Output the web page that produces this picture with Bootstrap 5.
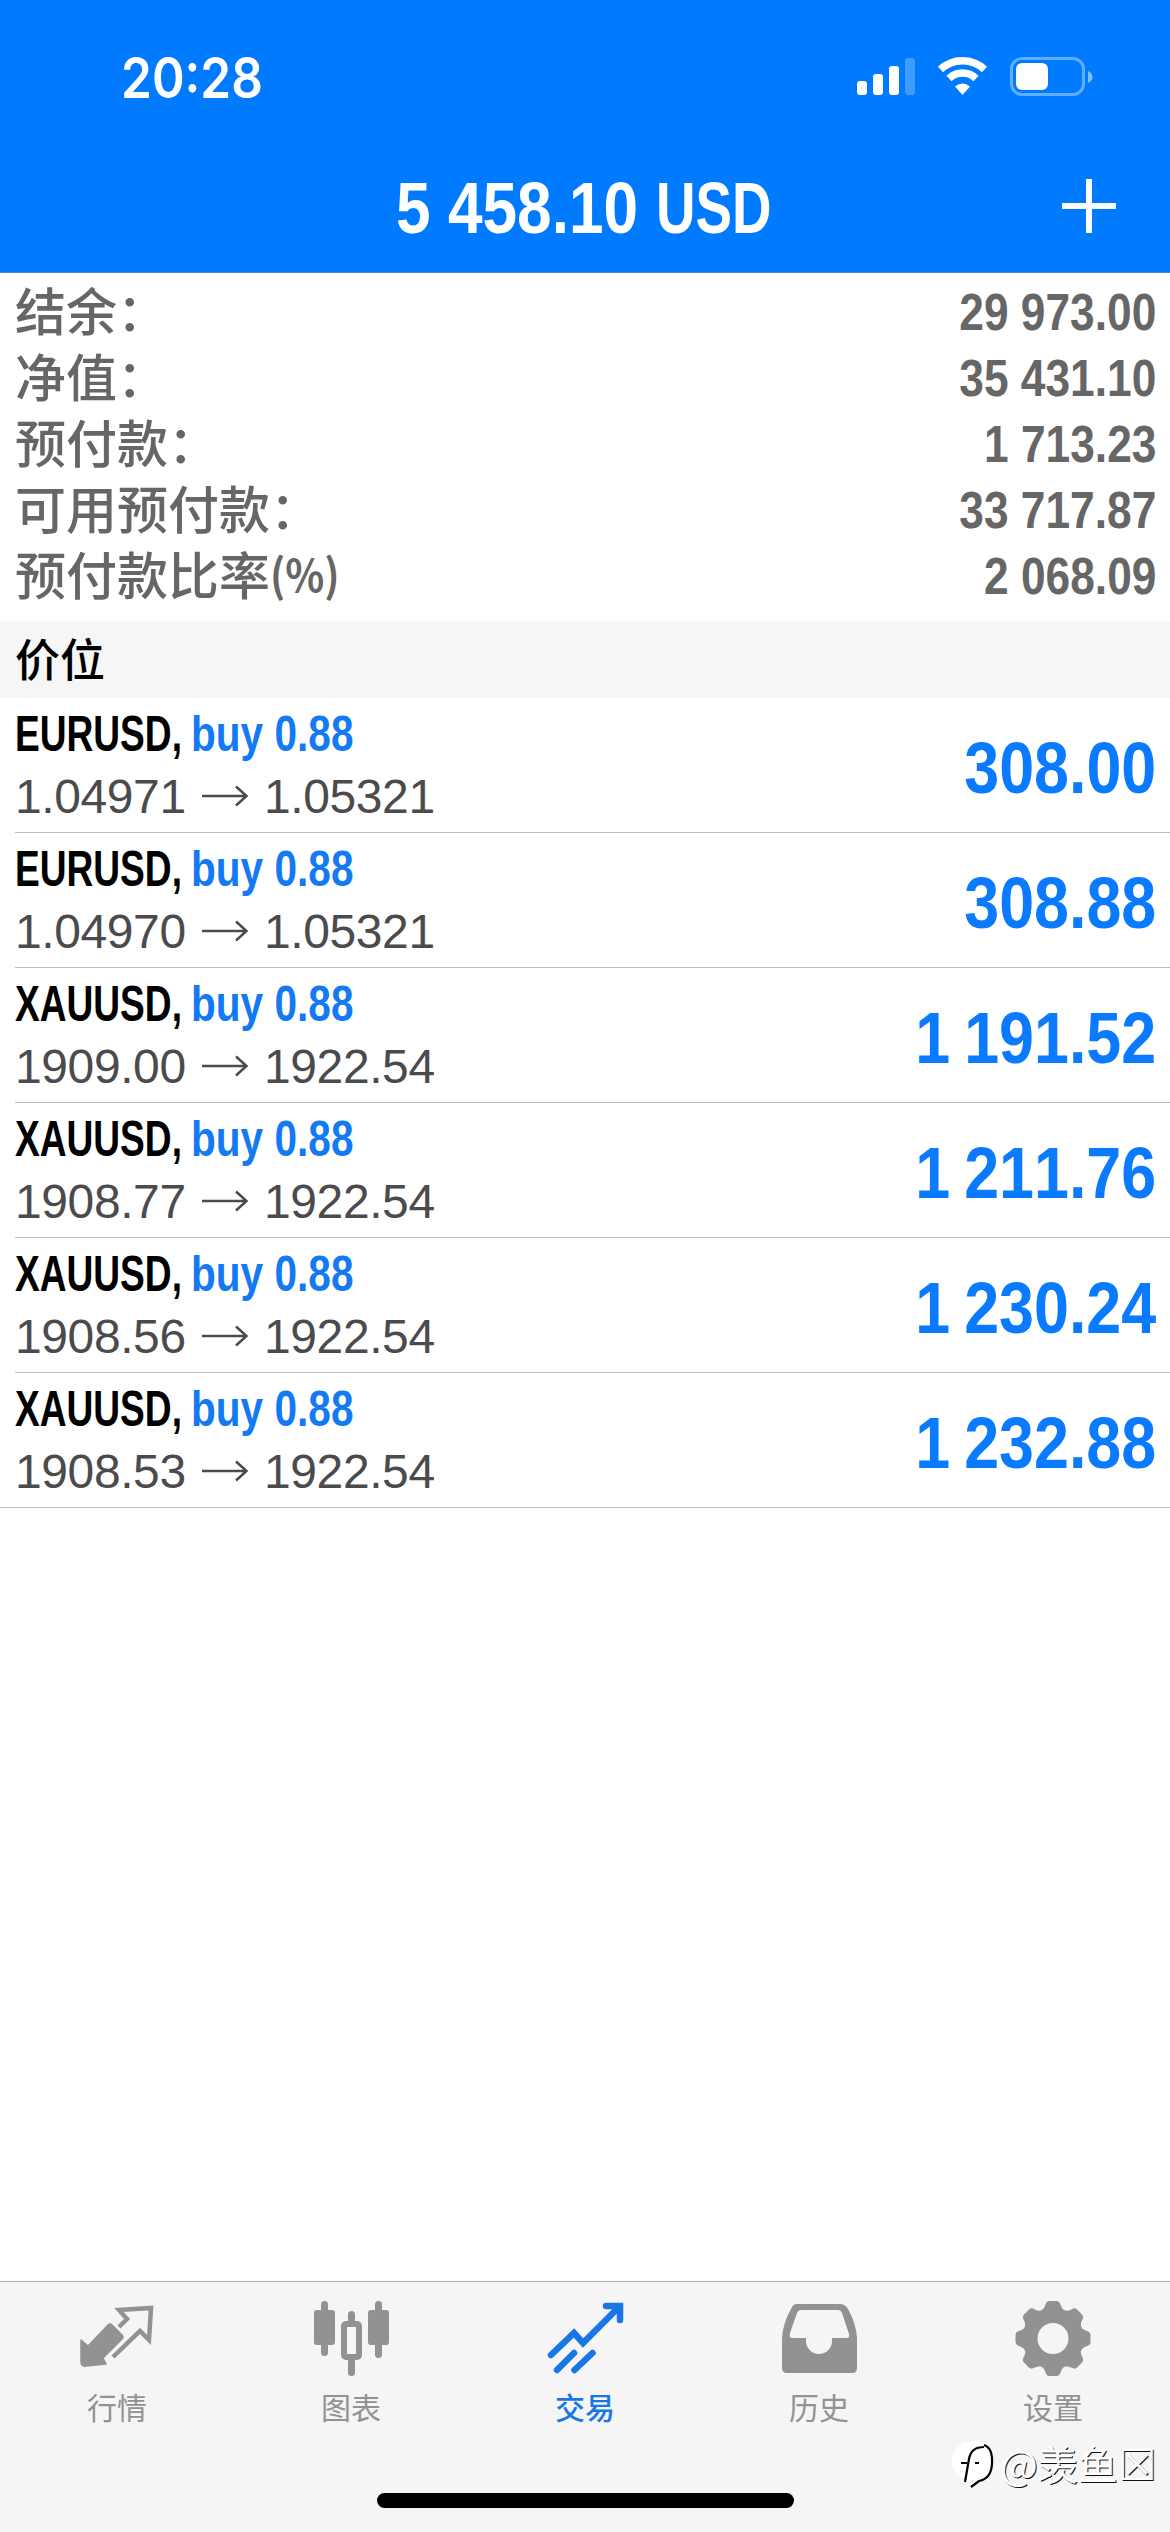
<!DOCTYPE html>
<html lang="zh-CN">
<head>
<meta charset="utf-8">
<meta name="viewport" content="width=device-width, initial-scale=1">
<title>交易</title>
<link rel="stylesheet" href="https://cdn.jsdelivr.net/npm/bootstrap@5.3.0/dist/css/bootstrap.min.css">
<style>
  body { font-family: "Liberation Sans", "Noto Sans CJK SC", sans-serif; background: #fff; color: #000; }
  .screen { width: 1170px; height: 2532px; overflow: hidden; }
  .topbar { background: #007aff; height: 273px; border-bottom: 1px solid #4a86c4; color: #fff; }
  .status { height: 153px; padding: 1px 75px 0 121px; }
  .clock { font-family: Inter, sans-serif; font-weight: 600; font-size: 56px; line-height: 1; padding-top: 1px; transform: scaleX(.885); }
  .titlebar { height: 110px; padding-right: 20px; font-size: 73px; font-weight: 700; line-height: 109px; }
  .title-num { width: 262px; }
  .title-num .narrow { transform: scaleX(.852); }
  .title-cur { width: 118px; margin-left: 18px; }
  .title-cur .narrow { transform: scaleX(.75); }
  .narrow { display: inline-block; white-space: nowrap; font-kerning: none; }
  .narrow-l { transform-origin: left center; }
  .narrow-r { transform-origin: right center; }
  .plus-btn { right: 54px; top: 26px; line-height: 0; }
  .summary { height: 348px; padding: 4px 14px 0 15px; color: #666; }
  .sum-row { height: 66px; line-height: 66px; }
  .sum-label { font-family: "Noto Sans CJK SC", sans-serif; font-weight: 500; font-size: 51px; line-height: 64px; }
  .sum-pct { font-size: 45px; font-weight: 700; line-height: 1; transform: translateY(-3px) scaleX(.9); }
  .sum-val { font-weight: 700; font-size: 52px; line-height: 71px; transform: scaleX(.852); }
  .band { height: 77px; line-height: 74px; padding-left: 15px; background: #f6f6f7; font-family: "Noto Sans CJK SC", sans-serif; font-weight: 500; font-size: 45px; }
  .pos { height: 135px; margin-left: 15px; padding-right: 14px; border-bottom: 1px solid #bfbfc3; }
  .pos-last { margin-left: 0; padding-left: 15px; }
  .pos-head { font-weight: 700; font-size: 50px; line-height: 60px; margin-top: 6px; }
  .sym { width: 176px; }
  .sym .narrow { transform: scaleX(.742); }
  .side { color: #137af3; transform: scaleX(.812); }
  .prices { font-size: 48px; line-height: 65px; color: #4b4b4e; letter-spacing: -.4px; font-kerning: none; }
  .price-open { width: 187px; }
  .profit { color: #0a7aff; font-weight: 700; font-size: 73px; line-height: 139px; word-spacing: -4px; transform: scaleX(.86); }
  .tabs { height: 251px; background: #f5f5f5; border-top: 1px solid #ababad; padding-top: 19px; color: #929292; }
  .tab-i { width: 234px; font-family: "Noto Sans CJK SC", sans-serif; font-size: 30px; line-height: 40px; }
  .tab-i svg { display: block; margin: 0 auto 7px; }
  .tab-on { color: #1a76e6; font-weight: 500; }
  .home { width: 417px; height: 15px; border-radius: 8px; background: #000; left: 377px; bottom: 24px; }
  .wm { left: 950px; top: 153px; height: 56px; color: #fff; font-family: "Noto Sans CJK SC", sans-serif; font-size: 40px; line-height: 52px; text-shadow: 1px 1px 0 #111; }
  .wm-box { font-family: "DejaVu Sans", sans-serif; font-size: 43px; line-height: 1; }
</style>
</head>
<body>
<div class="screen d-flex flex-column">
  <header class="topbar flex-shrink-0">
    <div class="status d-flex justify-content-between align-items-center">
      <div class="clock narrow narrow-l">20:28</div>
      <svg width="242" height="42" viewBox="0 0 242 42" fill="#fff">
        <rect x="4" y="25" width="10" height="14" rx="3"/>
        <rect x="20" y="18" width="10" height="21" rx="3"/>
        <rect x="36" y="10" width="10" height="29" rx="3"/>
        <rect x="52" y="2" width="10" height="37" rx="3" opacity=".25"/>
        <g fill="none" stroke="#fff" stroke-width="7.5">
          <path d="M87.500 13.500A32 32 0 0 1 131.500 13.500"/>
          <path d="M96 22.500A19.500 19.500 0 0 1 123 22.500"/>
        </g>
        <path d="M102 30.500Q109.500 24.500 117 30.500L109.500 39z"/>
        <rect x="158.500" y="2.500" width="72" height="36" rx="10.500" fill="none" stroke="#fff" stroke-width="3" opacity=".38"/>
        <rect x="163" y="7" width="32" height="27" rx="6"/>
        <path d="M235 15q4.500 2 4.500 6t-4.500 6z" opacity=".5"/>
      </svg>
    </div>
    <div class="titlebar position-relative d-flex justify-content-center">
      <div class="title-num d-flex justify-content-end"><span class="narrow narrow-r">5 458.10</span></div>
      <div class="title-cur"><span class="narrow narrow-l">USD</span></div>
      <span class="plus-btn position-absolute"><svg width="54" height="54"><path d="M27 0v54M0 27h54" stroke="#fff" stroke-width="6"/></svg></span>
    </div>
  </header>

  <section class="summary flex-shrink-0">
    <div class="sum-row d-flex justify-content-between"><span class="sum-label">结余：</span><span class="sum-val narrow narrow-r">29 973.00</span></div>
    <div class="sum-row d-flex justify-content-between"><span class="sum-label">净值：</span><span class="sum-val narrow narrow-r">35 431.10</span></div>
    <div class="sum-row d-flex justify-content-between"><span class="sum-label">预付款：</span><span class="sum-val narrow narrow-r">1 713.23</span></div>
    <div class="sum-row d-flex justify-content-between"><span class="sum-label">可用预付款：</span><span class="sum-val narrow narrow-r">33 717.87</span></div>
    <div class="sum-row d-flex justify-content-between"><span class="sum-label">预付款比率<span class="sum-pct narrow narrow-l">(%)</span></span><span class="sum-val narrow narrow-r">2 068.09</span></div>
  </section>

  <div class="band flex-shrink-0">价位</div>

  <main class="flex-grow-1" id="positions"></main>

  <nav class="tabs position-relative d-flex flex-shrink-0 text-center">
    <div class="tab-i">
      <svg width="78" height="78" viewBox="0 0 78 78">
        <path d="M3 39l7 6L30 24q2-2 4 0l10 10q2 2 0 4L25 57l3 6-20 2q-5 1-5-4z" fill="#929292" stroke="#929292" stroke-width="1.500" stroke-linejoin="round"/>
        <path d="M41 26l8-8-8-9 32-2-2 32-9-9-27 26" fill="none" stroke="#929292" stroke-width="4.500"/>
      </svg>行情</div>
    <div class="tab-i">
      <svg width="78" height="78" viewBox="0 0 78 78" fill="#929292">
        <rect x="9" y="0" width="7" height="55" rx="3.500"/><rect x="2" y="9" width="21" height="35" rx="3"/>
        <rect x="63" y="0" width="7" height="57" rx="3.500"/><rect x="56" y="9" width="21" height="35" rx="3"/>
        <rect x="36" y="10" width="7" height="14" rx="3.500"/><rect x="36" y="55" width="7" height="20" rx="3.500"/>
        <rect x="32" y="23" width="15" height="33" rx="2" fill="none" stroke="#929292" stroke-width="6"/>
      </svg>图表</div>
    <div class="tab-i tab-on">
      <svg width="78" height="78" viewBox="0 0 78 78" fill="none" stroke="#1a76e6" stroke-width="6.500" stroke-linecap="round">
        <path d="M5 54L28 32l9 10L73 6M60 5h14v14" />
        <path d="M68 5l6 0 0 6z" fill="#1a76e6" stroke-width="4"/>
        <path d="M11 69l17-17M28.500 69l18-17"/>
      </svg>交易</div>
    <div class="tab-i">
      <svg width="78" height="78" viewBox="0 0 78 78">
        <path fill="#929292" fill-rule="evenodd" d="M17 3h43q5 0 8 5 8 14 9 29v30q0 5-5 5H7q-5 0-5-5V37Q3 22 11 8q2-5 6-5zM21 9q-3 0-4 3L10 32q-1 5 2 5h14v3a13 13 0 0 0 26 0v-3h15q3 0 2-4L62 12q-1-3-4-3z"/>
      </svg>历史</div>
    <div class="tab-i">
      <svg width="78" height="78" viewBox="-39 -37.500 78 78" fill="#929292">
        <circle r="23" fill="none" stroke="#929292" stroke-width="15"/>
        <g id="cog"></g>
      </svg>设置</div>
    <div class="wm position-absolute d-flex align-items-center">
      <svg width="50" height="54" viewBox="0 0 50 54"><circle cx="22" cy="25" r="20" fill="#fff"/><path d="M15 46l4-23q2-12 15-12M11 27h6M25 27h4M34 9q9 3 8 19-1 15-13 17l-8 6" fill="none" stroke="#000" stroke-width="2.200"/></svg>
      <span>@羡鱼<span class="wm-box">☒</span></span>
    </div>
    <div class="home position-absolute"></div>
  </nav>
</div>
<script src="https://cdn.jsdelivr.net/npm/bootstrap@5.3.0/dist/js/bootstrap.bundle.min.js"></script>
<script>
  const rows = [
    ["EURUSD", "1.04971", "1.05321", "308.00"],
    ["EURUSD", "1.04970", "1.05321", "308.88"],
    ["XAUUSD", "1909.00", "1922.54", "1 191.52"],
    ["XAUUSD", "1908.77", "1922.54", "1 211.76"],
    ["XAUUSD", "1908.56", "1922.54", "1 230.24"],
    ["XAUUSD", "1908.53", "1922.54", "1 232.88"]
  ];
  document.getElementById("positions").innerHTML = rows.map(([s, a, b, p], i) => `
    <div class="pos d-flex justify-content-between ${i === rows.length - 1 ? "pos-last" : ""}">
      <div>
        <div class="pos-head d-flex"><div class="sym"><span class="narrow narrow-l">${s},</span></div><span class="side narrow narrow-l">buy 0.88</span></div>
        <div class="prices d-flex align-items-center"><span class="price-open">${a}</span>
          <svg width="62" height="24" viewBox="0 0 62 24" fill="none" stroke="#4b4b4e" stroke-width="2.500"><path d="M0 11H45M34 1.500L44.500 11 34 20.500"/></svg>
          <span>${b}</span></div>
      </div>
      <span class="profit narrow narrow-r">${p}</span>
    </div>`).join("");
  // Eight rounded teeth around the gear's ring
  document.getElementById("cog").innerHTML = Array.from({ length: 8 }, (_, i) =>
    `<path transform="rotate(${i * 45})" d="M-13 -27Q-9 -29 -7.500 -34Q-6.500 -37.500 -3.500 -37.500H3.500Q6.500 -37.500 7.500 -34Q9 -29 13 -27z"/>`).join("");
</script>
</body>
</html>
